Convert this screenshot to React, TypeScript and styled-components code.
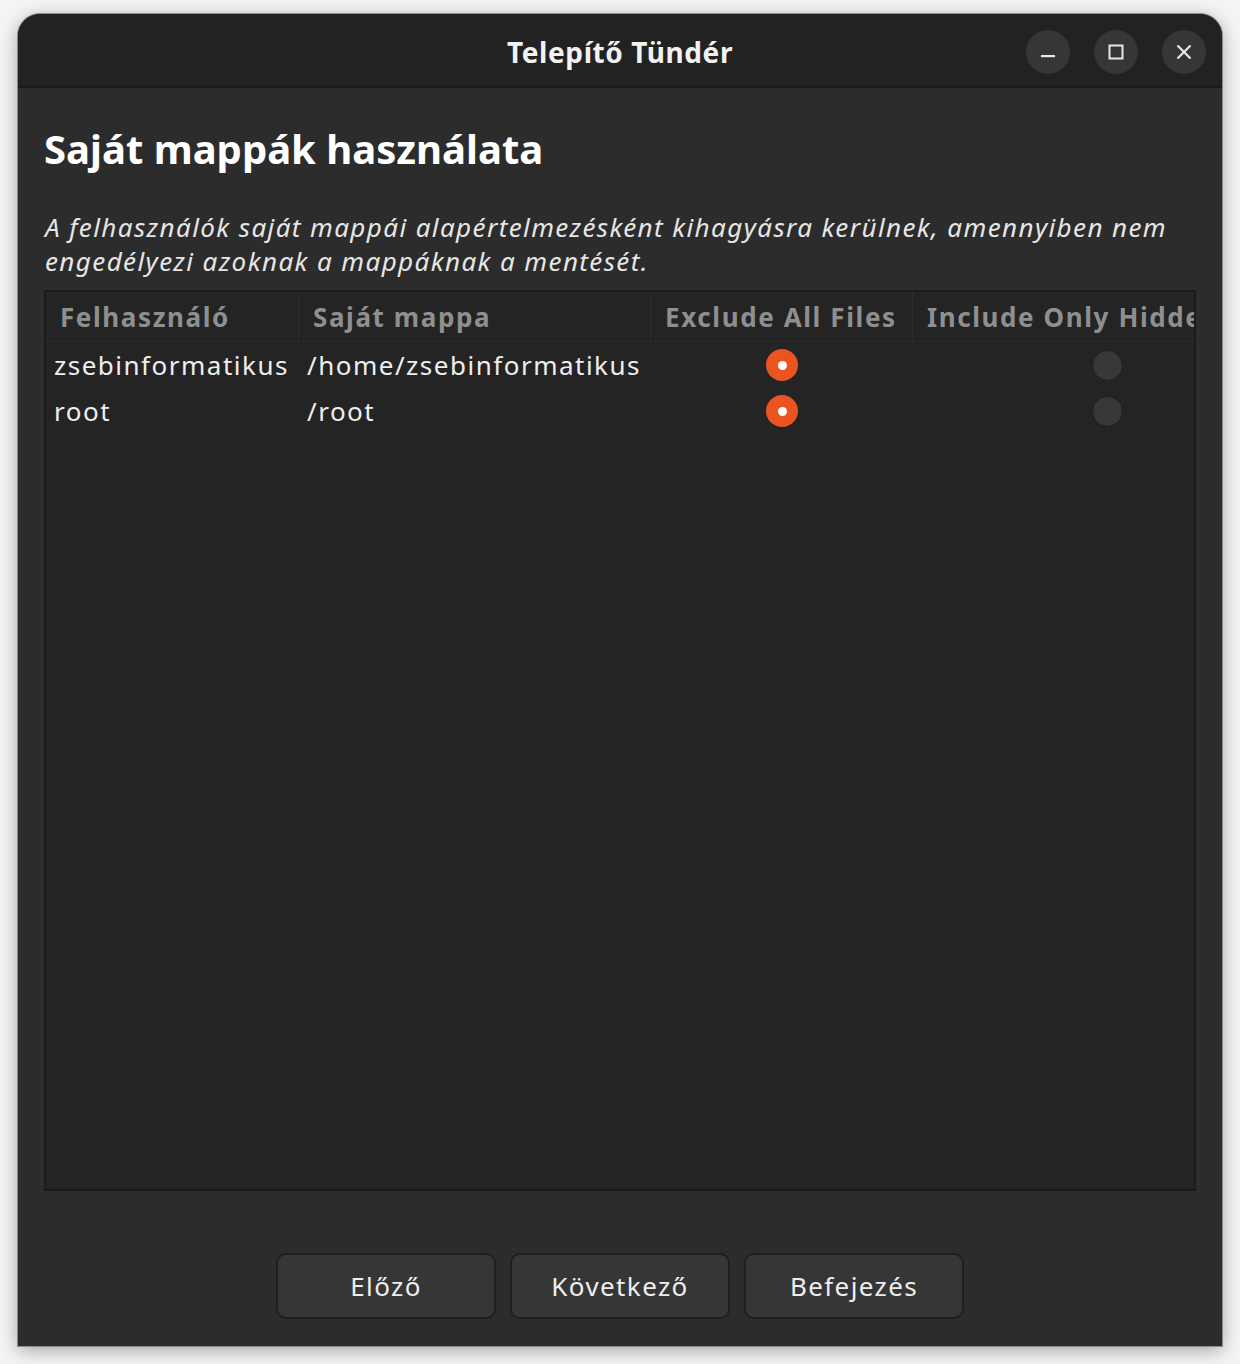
import React from "react";
import styled, { createGlobalStyle } from "styled-components";

const Global = createGlobalStyle`
  html, body { margin: 0; padding: 0; }
  body {
    background: #f2f2f2;
    font-family: "Noto Sans", "Open Sans", sans-serif;
    width: 1240px;
    height: 1364px;
    overflow: hidden;
  }
  * { box-sizing: border-box; }
`;

const Page = styled.div`
  width: 1240px;
  height: 1364px;
  padding: 14px 18px 18px 18px;
  background: #f4f4f4;
`;

const Window = styled.div`
  width: 1204px;
  height: 1332px;
  display: flex;
  flex-direction: column;
  background: #2c2c2c;
  border-radius: 22px 22px 0 0;
  overflow: hidden;
  box-shadow: 0 0 0 1px #8a8a8a, 0 4px 18px rgba(0, 0, 0, 0.35);
`;

const TitleBar = styled.div`
  height: 74px;
  flex: none;
  display: flex;
  align-items: center;
  justify-content: center;
  position: relative;
  background: #222222;
  border-bottom: 2px solid #1a1a1a;
`;

const Title = styled.div`
  color: #f2f2f2;
  font-weight: 700;
  font-size: 28px;
  letter-spacing: 0.6px;
  margin-top: 4px;
`;

const Controls = styled.div`
  position: absolute;
  right: 16px;
  top: 16px;
  display: flex;
  gap: 24px;
`;

const CtrlButton = styled.div`
  width: 44px;
  height: 44px;
  border-radius: 50%;
  background: #363636;
  display: flex;
  align-items: center;
  justify-content: center;
`;

const Content = styled.div`
  flex: 1;
  display: flex;
  flex-direction: column;
  padding: 34px 26px 27px 26px;
  min-height: 0;
`;

const Heading = styled.h1`
  margin: 0;
  color: #ffffff;
  font-size: 40px;
  font-weight: 700;
  line-height: 54px;
`;

const Description = styled.p`
  margin: 34px 0 12px 1px;
  color: #e6e6e6;
  font-style: italic;
  font-size: 26px;
  line-height: 34px;
  letter-spacing: 1.4px;
  white-space: nowrap;
`;

const cols = "253px 352px 262px 388px";

const TableBox = styled.div`
  flex: 1;
  background: #242424;
  border: 2px solid #1b1b1b;
  display: flex;
  flex-direction: column;
  overflow: hidden;
`;

const HeaderRow = styled.div`
  display: grid;
  grid-template-columns: ${cols};
  height: 50px;
  border-bottom: 1px solid #2b2b2b;
`;

const HeaderCell = styled.div<{ $last?: boolean }>`
  display: flex;
  align-items: center;
  padding-left: 14px;
  color: #8e9090;
  font-weight: 700;
  font-size: 26px;
  letter-spacing: 1.6px;
  white-space: nowrap;
  overflow: hidden;
  border-right: ${(p) => (p.$last ? "none" : "1px solid #2e2e2e")};
`;

const Row = styled.div`
  display: grid;
  grid-template-columns: ${cols};
  height: 46px;
`;

const Cell = styled.div<{ $center?: boolean; $pad?: number }>`
  display: flex;
  align-items: center;
  justify-content: ${(p) => (p.$center ? "center" : "flex-start")};
  padding-left: ${(p) => p.$pad ?? 8}px;
  color: #eeeeee;
  font-size: 26px;
  letter-spacing: 1.5px;
  white-space: nowrap;
`;

const Radio = styled.div<{ $checked?: boolean }>`
  width: ${(p) => (p.$checked ? 32 : 31)}px;
  height: ${(p) => (p.$checked ? 32 : 31)}px;
  border-radius: 50%;
  background: ${(p) => (p.$checked ? "#e95420" : "#383838")};
  border: ${(p) => (p.$checked ? "none" : "1.5px solid #1e1e1e")};
  display: flex;
  align-items: center;
  justify-content: center;
  &::after {
    content: "";
    display: ${(p) => (p.$checked ? "block" : "none")};
    width: 9px;
    height: 9px;
    border-radius: 50%;
    background: #ffffff;
  }
`;

const Footer = styled.div`
  display: flex;
  justify-content: center;
  gap: 14px;
  margin-top: 62px;
`;

const Button = styled.button`
  width: 220px;
  height: 66px;
  border-radius: 10px;
  background: #363636;
  border: 2px solid #1f1f1f;
  color: #eeeeee;
  font-family: "Noto Sans", "Open Sans", sans-serif;
  font-size: 26px;
  letter-spacing: 1.4px;
  padding: 0;
`;

const users = [
  { name: "zsebinformatikus", home: "/home/zsebinformatikus" },
  { name: "root", home: "/root" },
];

export default function App() {
  return (
    <>
      <Global />
      <Page>
        <Window>
          <TitleBar>
            <Title>Telepítő Tündér</Title>
            <Controls>
              <CtrlButton>
                <svg width="20" height="20" viewBox="0 0 20 20">
                  <rect x="3" y="13" width="14" height="2.2" fill="#e8e8e8" />
                </svg>
              </CtrlButton>
              <CtrlButton>
                <svg width="20" height="20" viewBox="0 0 20 20">
                  <rect x="3.5" y="3.5" width="13" height="13" fill="none" stroke="#e8e8e8" strokeWidth="2" />
                </svg>
              </CtrlButton>
              <CtrlButton>
                <svg width="20" height="20" viewBox="0 0 20 20">
                  <path d="M3.5 3.5 L16.5 16.5 M16.5 3.5 L3.5 16.5" stroke="#e8e8e8" strokeWidth="2.2" />
                </svg>
              </CtrlButton>
            </Controls>
          </TitleBar>
          <Content>
            <Heading>Saját mappák használata</Heading>
            <Description>
              A felhasználók saját mappái alapértelmezésként kihagyásra kerülnek, amennyiben nem
              <br />
              engedélyezi azoknak a mappáknak a mentését.
            </Description>
            <TableBox>
              <HeaderRow>
                <HeaderCell>Felhasználó</HeaderCell>
                <HeaderCell>Saját mappa</HeaderCell>
                <HeaderCell>Exclude All Files</HeaderCell>
                <HeaderCell $last>Include Only Hidden</HeaderCell>
              </HeaderRow>
              {users.map((u) => (
                <Row key={u.name}>
                  <Cell>{u.name}</Cell>
                  <Cell>{u.home}</Cell>
                  <Cell $center $pad={0}>
                    <Radio $checked />
                  </Cell>
                  <Cell $center $pad={0}>
                    <Radio />
                  </Cell>
                </Row>
              ))}
            </TableBox>
            <Footer>
              <Button>Előző</Button>
              <Button>Következő</Button>
              <Button>Befejezés</Button>
            </Footer>
          </Content>
        </Window>
      </Page>
    </>
  );
}
